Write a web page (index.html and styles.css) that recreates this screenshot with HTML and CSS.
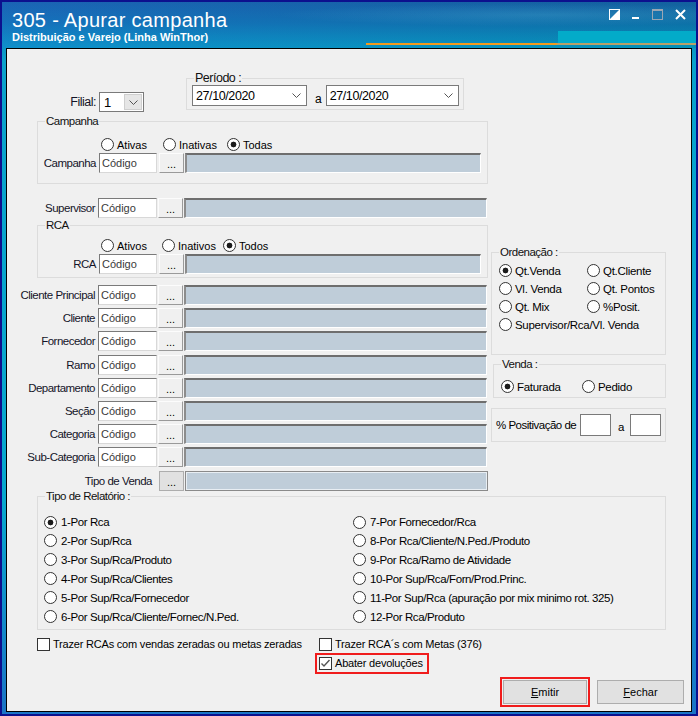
FILE: index.html
```html
<!DOCTYPE html>
<html lang="pt-BR">
<head>
  <meta charset="UTF-8">
  <meta name="viewport" content="width=device-width, initial-scale=1.0">
  <title>305 - Apurar campanha</title>
  <link rel="stylesheet" href="styles.css">
</head>
<body>
<div class="window">
  <div class="titlebar">
    <div class="titles">
      <div class="title">305 - Apurar campanha</div>
      <div class="subtitle">Distribuição e Varejo (Linha WinThor)</div>
    </div>
    <div class="win-controls">
      <svg width="11" height="11" viewBox="0 0 11 11"><rect x="0.5" y="0.5" width="10" height="10" fill="none" stroke="#fff"/><polygon points="10.5,0.5 10.5,10.5 0.5,10.5" fill="#fff"/></svg>
      <svg width="8" height="11" viewBox="0 0 8 11"><rect x="0" y="8" width="7" height="2" fill="#fff"/></svg>
      <svg width="11" height="11" viewBox="0 0 11 11"><rect x="0.5" y="0.5" width="10" height="10" fill="none" stroke="#9aa6b4"/><rect x="0" y="0" width="11" height="2" fill="#9aa6b4"/></svg>
      <svg width="11" height="11" viewBox="0 0 11 11"><path d="M1 1 L10 10 M10 1 L1 10" stroke="#fff" stroke-width="2"/></svg>
    </div>
  </div>

  <div class="panel">
    <div class="main">
      <div class="col-left">
        <div class="top-row">
          <div class="filial">
            <span class="lbl">Filial:</span>
            <div class="combo-filial">
              <span class="combo-value">1</span>
              <span class="drop"><svg width="9" height="5" viewBox="0 0 9 5"><path d="M0.5 0.5 L4.5 4.5 L8.5 0.5" fill="none" stroke="#555"/></svg></span>
            </div>
          </div>
          <div class="group periodo">
            <span class="legend">Período :</span>
            <div class="date-combo">27/10/2020<svg width="9" height="5" viewBox="0 0 9 5"><path d="M0.5 0.5 L4.5 4.5 L8.5 0.5" fill="none" stroke="#555"/></svg></div>
            <span class="sep">a</span>
            <div class="date-combo wide">27/10/2020<svg width="9" height="5" viewBox="0 0 9 5"><path d="M0.5 0.5 L4.5 4.5 L8.5 0.5" fill="none" stroke="#555"/></svg></div>
          </div>
        </div>

        <div class="group box-campanha">
          <span class="legend">Campanha</span>
          <div class="opts opts-campanha">
            <span class="radio"><i class="dot"></i>Ativas</span>
            <span class="radio"><i class="dot"></i>Inativas</span>
            <span class="radio"><i class="dot on"></i>Todas</span>
          </div>
          <div class="row">
            <span class="lbl">Campanha</span><span class="code">Código</span><span class="dots">...</span><span class="desc"></span>
          </div>
        </div>

        <div class="row row-supervisor">
          <span class="lbl">Supervisor</span><span class="code">Código</span><span class="dots">...</span><span class="desc"></span>
        </div>

        <div class="group box-rca">
          <span class="legend">RCA</span>
          <div class="opts opts-rca">
            <span class="radio"><i class="dot"></i>Ativos</span>
            <span class="radio"><i class="dot"></i>Inativos</span>
            <span class="radio"><i class="dot on"></i>Todos</span>
          </div>
          <div class="row">
            <span class="lbl">RCA</span><span class="code">Código</span><span class="dots">...</span><span class="desc"></span>
          </div>
        </div>

        <div class="filters">
          <div class="row"><span class="lbl">Cliente Principal</span><span class="code">Código</span><span class="dots">...</span><span class="desc"></span></div>
          <div class="row"><span class="lbl">Cliente</span><span class="code">Código</span><span class="dots">...</span><span class="desc"></span></div>
          <div class="row"><span class="lbl">Fornecedor</span><span class="code">Código</span><span class="dots">...</span><span class="desc"></span></div>
          <div class="row"><span class="lbl">Ramo</span><span class="code">Código</span><span class="dots">...</span><span class="desc"></span></div>
          <div class="row"><span class="lbl">Departamento</span><span class="code">Código</span><span class="dots">...</span><span class="desc"></span></div>
          <div class="row"><span class="lbl">Seção</span><span class="code">Código</span><span class="dots">...</span><span class="desc"></span></div>
          <div class="row"><span class="lbl">Categoria</span><span class="code">Código</span><span class="dots">...</span><span class="desc"></span></div>
          <div class="row"><span class="lbl">Sub-Categoria</span><span class="code">Código</span><span class="dots">...</span><span class="desc"></span></div>
          <div class="row row-tipo-venda"><span class="lbl">Tipo de Venda</span><span class="dots flat">...</span><span class="desc flat"></span></div>
        </div>
      </div>

      <div class="col-right">
        <div class="group box-ordenacao">
          <span class="legend">Ordenação :</span>
          <div class="order-grid">
            <span class="radio"><i class="dot on"></i>Qt.Venda</span>
            <span class="radio"><i class="dot"></i>Qt.Cliente</span>
            <span class="radio"><i class="dot"></i>Vl. Venda</span>
            <span class="radio"><i class="dot"></i>Qt. Pontos</span>
            <span class="radio"><i class="dot"></i>Qt. Mix</span>
            <span class="radio"><i class="dot"></i>%Posit.</span>
            <span class="radio span-all"><i class="dot"></i>Supervisor/Rca/Vl. Venda</span>
          </div>
        </div>

        <div class="group box-venda">
          <span class="legend">Venda :</span>
          <div class="venda-grid">
            <span class="radio"><i class="dot on"></i>Faturada</span>
            <span class="radio"><i class="dot"></i>Pedido</span>
          </div>
        </div>

        <div class="group box-positivacao">
          <span class="pos-text">% Positivação de</span>
          <span class="num-input"></span>
          <span class="sep">a</span>
          <span class="num-input"></span>
        </div>
      </div>
    </div>

    <div class="group box-relatorio">
      <span class="legend">Tipo de Relatório :</span>
      <div class="report-grid">
        <span class="radio"><i class="dot on"></i>1-Por Rca</span>
        <span class="radio"><i class="dot"></i>2-Por Sup/Rca</span>
        <span class="radio"><i class="dot"></i>3-Por Sup/Rca/Produto</span>
        <span class="radio"><i class="dot"></i>4-Por Sup/Rca/Clientes</span>
        <span class="radio"><i class="dot"></i>5-Por Sup/Rca/Fornecedor</span>
        <span class="radio"><i class="dot"></i>6-Por Sup/Rca/Cliente/Fornec/N.Ped.</span>
        <span class="radio"><i class="dot"></i>7-Por Fornecedor/Rca</span>
        <span class="radio"><i class="dot"></i>8-Por Rca/Cliente/N.Ped./Produto</span>
        <span class="radio"><i class="dot"></i>9-Por Rca/Ramo de Atividade</span>
        <span class="radio"><i class="dot"></i>10-Por Sup/Rca/Forn/Prod.Princ.</span>
        <span class="radio"><i class="dot"></i>11-Por Sup/Rca (apuração por mix minimo rot. 325)</span>
        <span class="radio"><i class="dot"></i>12-Por Rca/Produto</span>
      </div>
    </div>

    <div class="checks">
      <span class="check"><i class="box"></i>Trazer RCAs com vendas zeradas ou metas zeradas</span>
      <span class="check"><i class="box"></i>Trazer RCA´s com Metas (376)</span>
      <span class="check highlight col-2"><i class="box checked"><svg width="11" height="11" viewBox="0 0 11 11"><path d="M1.5 5.5 L4 8 L9.5 2" fill="none" stroke="#555" stroke-width="1.4"/></svg></i>Abater devoluções</span>
    </div>

    <div class="actions">
      <button class="btn highlight"><u>E</u>mitir</button>
      <button class="btn"><u>F</u>echar</button>
    </div>
  </div>
</div>
</body>
</html>
```

FILE: styles.css
```css
* {
  box-sizing: border-box;
}

body {
  margin: 0;
  font-family: 'Liberation Sans', Arial, sans-serif;
  font-size: 11px;
  color: #000;
  background: #fff;
}

/* window frame */
.window {
  width: 698px;
  height: 716px;
  border: 2px solid #0c108e;
  background: linear-gradient(to bottom, #1669ac 0, #0aa2cc 60px, #08a8cf 70%, #1b74c6 100%);
  display: flex;
  flex-direction: column;
}

.titlebar {
  position: relative;
  height: 46px;
  flex: none;
  display: flex;
  justify-content: space-between;
  padding: 7px 10px 0 10px;
  color: #fff;
  background:
    radial-gradient(ellipse 55% 35% at 78% 28%, rgba(120, 220, 240, 0.18), transparent 70%),
    linear-gradient(to right, rgba(40, 80, 200, 0.25), rgba(0, 40, 70, 0.15)),
    linear-gradient(to bottom, #176aae 0%, #0f7db8 45%, #06a6cc 100%);
}

/* orange accent strip under the title area */
.titlebar::before {
  content: '';
  position: absolute;
  left: 364px;
  right: 0;
  bottom: 3px;
  height: 2px;
  background: linear-gradient(to right, #f49a1c 0, #f49a1c 190px, #b8a068 192px, #b8a068 100%);
}

.titlebar::after {
  content: '';
  position: absolute;
  left: 556px;
  right: 0;
  top: 29px;
  height: 12px;
  background: #03abc9;
}

.title {
  font-size: 20px;
  line-height: 22px;
  letter-spacing: 0.3px;
}

.subtitle {
  font-size: 11px;
  font-weight: bold;
  line-height: 13px;
}

.win-controls {
  display: flex;
  align-items: flex-start;
  gap: 12px;
  padding-top: 0;
}

.win-controls svg {
  display: block;
}

/* client area */
.panel {
  margin: 0 4px;
  height: 664px;
  flex: none;
  background: #f0f0f0;
  border: 1px solid #000;
}

.main {
  display: flex;
}

.col-left {
  width: 484px;
}

.col-right {
  width: 175px;
  padding-top: 203px;
}

.group {
  position: relative;
  border: 1px solid #dcdcdc;
}

.legend {
  position: absolute;
  top: -7px;
  left: 7px;
  padding: 0 1px;
  line-height: 13px;
  font-size: 11.5px;
  letter-spacing: -0.5px;
  background: #f0f0f0;
  color: #111;
}

.lbl {
  font-size: 11.5px;
  letter-spacing: -0.5px;
  color: #141428;
  text-align: right;
  white-space: nowrap;
}

/* filial + período */
.top-row {
  height: 72px;
  display: flex;
  align-items: flex-start;
}

.filial {
  display: flex;
  align-items: center;
  margin-top: 43px;
}

.filial .lbl {
  width: 89px;
  margin-right: 3px;
  font-size: 12.5px;
}

.combo-filial {
  width: 45px;
  height: 20px;
  border: 1px solid #7a7a7a;
  background: #fff;
  display: flex;
  align-items: center;
  padding: 1px;
}

.combo-value {
  flex: 1;
  padding-left: 3px;
  font-size: 13px;
}

.drop {
  width: 18px;
  height: 16px;
  background: #e6e6e6;
  border: 1px solid #cfcfcf;
  display: flex;
  align-items: center;
  justify-content: center;
}

.periodo {
  margin-left: 42px;
  margin-top: 29px;
  width: 278px;
  height: 32px;
  display: flex;
  align-items: flex-start;
  padding: 6px 0 0 5px;
}

.periodo .legend {
  font-size: 12.5px;
}

.date-combo {
  width: 115px;
  height: 21px;
  border: 1px solid #7a7a7a;
  background: #fff;
  display: flex;
  align-items: center;
  justify-content: space-between;
  padding: 0 5px 0 3px;
  font-size: 12.5px;
  letter-spacing: -0.4px;
}

.date-combo.wide {
  width: 133px;
}

.periodo .sep {
  margin: 7px 4px 0 8px;
  font-size: 12px;
}

/* radio buttons */
.radio {
  display: inline-flex;
  align-items: center;
  gap: 3px;
  height: 13px;
  white-space: nowrap;
}

.dot {
  width: 13px;
  height: 13px;
  flex: none;
  border: 1px solid #333;
  border-radius: 50%;
  background: #fff;
}

.dot.on {
  background: radial-gradient(circle, #1b1b1b 0, #1b1b1b 2.6px, #fff 3.2px);
}

.opts {
  display: grid;
  height: 13px;
  padding-left: 63px;
}

.opts-campanha {
  grid-template-columns: 62px 64px auto;
  margin-top: 16px;
  margin-bottom: 2px;
}

.opts-rca {
  grid-template-columns: 61px 61px auto;
  margin-top: 13px;
  margin-bottom: 2px;
}

/* code / lookup rows */
.row {
  display: flex;
  align-items: center;
  height: 20px;
}

.row .lbl {
  width: 88px;
  margin-right: 3px;
}

.code {
  width: 59px;
  height: 20px;
  line-height: 18px;
  padding-left: 2px;
  background: #fff;
  border: 1px solid;
  border-color: #7a7a7a #d8d8d8 #d8d8d8 #7a7a7a;
  color: #3a3a3a;
}

.dots {
  width: 25px;
  height: 20px;
  margin-left: 1px;
  line-height: 20px;
  text-align: center;
  background: #f0f0f0;
  border: 1px solid;
  border-color: #fcfcfc #9a9a9a #9a9a9a #fcfcfc;
}

.desc {
  width: 303px;
  height: 20px;
  margin-left: 1px;
  background: #bfcdd9;
  border-style: solid;
  border-width: 2px 1px 1px 2px;
  border-color: #6e6e6e #fff #fff #8c8c8c;
}

.group .row .lbl {
  width: 58px;
}

.group .row .code {
  width: 58px;
}

.group .row .dots {
  margin-left: 2px;
}

.group .row .desc {
  width: 296px;
}

.box-campanha {
  margin-left: 30px;
  width: 451px;
  height: 63px;
}

.row-supervisor {
  margin-top: 14px;
}

.box-rca {
  margin-top: 7px;
  margin-left: 30px;
  width: 451px;
  height: 53px;
}

.filters {
  margin-top: 7px;
  display: flex;
  flex-direction: column;
  gap: 3.2px;
}

.row-tipo-venda .lbl {
  width: 145px;
  margin-right: 6px;
}

.dots.flat {
  background: #e1e1e1;
  border-color: #adadad;
}

.desc.flat {
  border-width: 1px;
  border-color: #8a8a8a;
  box-shadow: inset 0 0 0 1px #e8eef3;
}

/* right column */
.box-ordenacao {
  width: 175px;
  height: 103px;
}

.order-grid {
  display: grid;
  grid-template-columns: 88px auto;
  grid-auto-rows: 13px;
  row-gap: 5px;
  padding: 11px 0 0 7px;
  font-size: 11.5px;
  letter-spacing: -0.3px;
}

.span-all {
  grid-column: 1 / -1;
}

.box-venda {
  margin-top: 9px;
  margin-left: 2px;
  width: 173px;
  height: 34px;
}

.venda-grid {
  display: grid;
  grid-template-columns: 81px auto;
  padding: 15px 0 0 7px;
  font-size: 11.5px;
  letter-spacing: -0.3px;
}

.box-positivacao {
  margin-top: 10px;
  width: 175px;
  height: 34px;
  display: flex;
  align-items: center;
  padding-left: 4px;
}

.pos-text {
  width: 84px;
  font-size: 11.5px;
  letter-spacing: -0.5px;
}

.num-input {
  width: 31px;
  height: 22px;
  background: #fff;
  border: 1px solid #7a7a7a;
}

.box-positivacao .sep {
  margin: 4px 6px 0 7px;
  font-size: 11.5px;
}

/* tipo de relatório */
.box-relatorio {
  margin-top: 5px;
  margin-left: 30px;
  width: 629px;
  height: 134px;
}

.report-grid {
  display: grid;
  grid-template-columns: 309px auto;
  grid-template-rows: repeat(6, 13px);
  grid-auto-flow: column;
  row-gap: 5.94px;
  padding: 19px 0 0 6px;
  font-size: 11.5px;
  letter-spacing: -0.4px;
}

.report-grid .radio {
  gap: 4px;
}

/* checkboxes */
.checks {
  display: grid;
  grid-template-columns: 282px auto;
  grid-auto-rows: 13px;
  row-gap: 6px;
  margin: 8px 0 0 30px;
}

.check {
  display: inline-flex;
  align-items: center;
  gap: 3px;
  height: 13px;
  letter-spacing: -0.2px;
  white-space: nowrap;
  justify-self: start;
}

.col-2 {
  grid-column: 2;
}

.box {
  width: 13px;
  height: 13px;
  flex: none;
  border: 1px solid #333;
  background: #fff;
  display: flex;
  align-items: center;
  justify-content: center;
}

.box svg {
  display: block;
}

.check.highlight {
  padding-right: 2px;
}

.highlight {
  outline: 2px solid #f01c1c;
  outline-offset: 2px;
}

/* buttons */
.actions {
  display: flex;
  justify-content: flex-end;
  gap: 10px;
  margin-top: 10px;
  padding-right: 7px;
}

.btn {
  width: 84px;
  height: 24px;
  padding: 0;
  font-family: inherit;
  font-size: 11px;
  color: #000;
  background: #e1e1e1;
  border: 1px solid #adadad;
}

.btn + .btn {
  width: 87px;
}

.btn.highlight {
  outline-offset: 1px;
}
```
